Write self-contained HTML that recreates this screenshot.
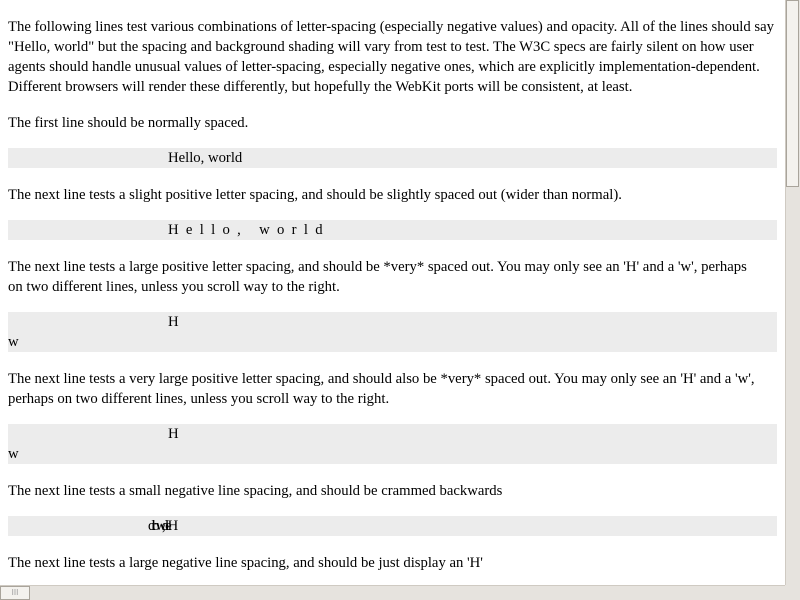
<!DOCTYPE html>
<html><head><meta charset="utf-8"><style>
html,body{margin:0;padding:0;overflow:hidden;}
body{width:800px;height:600px;position:relative;background:#fff;font-family:"Liberation Serif",serif;font-size:14.7px;line-height:20px;color:#000;}
#c{position:absolute;left:8px;top:0;width:769px;}
p{margin:16px 0;white-space:nowrap;position:relative;top:1px;}
.b{background:#ececec;text-indent:160px;white-space:nowrap;height:20px;}
.b2{height:40px;}
#vs{position:absolute;left:785px;top:0;width:15px;height:585px;background:#e6e3de;border-left:1px solid #cfcac2;box-sizing:border-box;}
#vt{position:absolute;left:786px;top:0;width:13px;height:187px;background:#f4f2ee;border:1px solid #a9a49b;box-sizing:border-box;}
#hs{position:absolute;left:0;top:585px;width:785px;height:15px;background:#e6e3de;border-top:1px solid #cfcac2;box-sizing:border-box;}
#ht{position:absolute;left:0;top:586px;width:30px;height:14px;background:#f4f2ee;border:1px solid #a9a49b;box-sizing:border-box;font-size:8px;line-height:12px;text-align:center;color:#999;font-family:"Liberation Sans",sans-serif;}
#corner{position:absolute;left:785px;top:585px;width:15px;height:15px;background:#e6e3de;}
</style></head><body>
<div id="c">
<p>The following lines test various combinations of letter-spacing (especially negative values) and opacity. All of the lines should say<br>"Hello, world" but the spacing and background shading will vary from test to test. The W3C specs are fairly silent on how user<br>agents should handle unusual values of letter-spacing, especially negative ones, which are explicitly implementation-dependent.<br>Different browsers will render these differently, but hopefully the WebKit ports will be consistent, at least.</p>
<p>The first line should be normally spaced.</p>
<div class="b">Hello, world</div>
<p>The next line tests a slight positive letter spacing, and should be slightly spaced out (wider than normal).</p>
<div class="b" style="letter-spacing:7.3px">Hello, world</div>
<p>The next line tests a large positive letter spacing, and should be *very* spaced out. You may only see an 'H' and a 'w', perhaps<br>on two different lines, unless you scroll way to the right.</p>
<div class="b b2">H<br>w</div>
<p>The next line tests a very large positive letter spacing, and should also be *very* spaced out. You may only see an 'H' and a 'w',<br>perhaps on two different lines, unless you scroll way to the right.</p>
<div class="b b2">H<br>w</div>
<p>The next line tests a small negative line spacing, and should be crammed backwards</p>
<div class="b" style="text-indent:140px;letter-spacing:-4px">dlrow ,olleH</div>
<p>The next line tests a large negative line spacing, and should be just display an 'H'</p>
</div>
<div id="vs"></div><div id="vt"></div>
<div id="hs"></div><div id="ht">III</div><div id="corner"></div>
</body></html>
